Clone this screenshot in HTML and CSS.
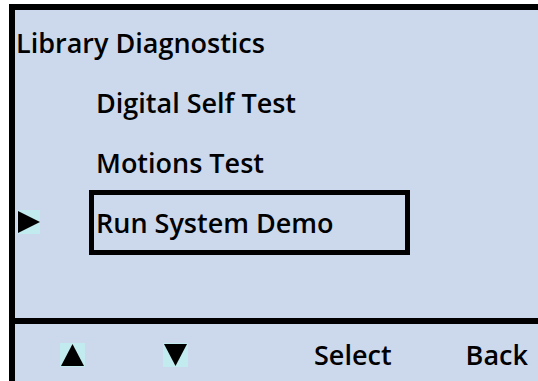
FILE: index.html
```html
<!DOCTYPE html>
<html lang="en">
<head>
    <meta charset="UTF-8">
    <meta name="viewport" content="width=device-width, initial-scale=1.0">
    <title>Library Diagnostics</title>
    <link rel="stylesheet" href="styles.css">
</head>
<body>
    <div class="screen">
        <div class="menu">
            <div class="menu-title">Library Diagnostics</div>
            <div class="menu-row">
                <span class="marker"></span>
                <span class="item">Digital Self Test</span>
            </div>
            <div class="menu-row">
                <span class="marker"></span>
                <span class="item">Motions Test</span>
            </div>
            <div class="menu-row selected">
                <span class="marker">
                    <svg class="glyph" width="23" height="24" viewBox="0 0 23 24">
                        <rect width="23" height="24" fill="#c2ebf0"/>
                        <polygon points="1,1 23,12 1,23" fill="#000"/>
                    </svg>
                </span>
                <span class="item">Run System Demo</span>
            </div>
        </div>

        <!-- Soft keys -->
        <div class="softkeys">
            <span class="key key-up">
                <svg class="glyph" width="25" height="24" viewBox="0 0 25 24">
                    <rect width="25" height="24" fill="#c2ebf0"/>
                    <polygon points="12.5,1 24,23 1,23" fill="#000"/>
                </svg>
            </span>
            <span class="key key-down">
                <svg class="glyph" width="25" height="24" viewBox="0 0 25 24">
                    <rect width="25" height="24" fill="#c2ebf0"/>
                    <polygon points="1,1 24,1 12.5,23" fill="#000"/>
                </svg>
            </span>
            <span class="key key-select">Select</span>
            <span class="key key-back">Back</span>
        </div>
    </div>
</body>
</html>
```
FILE: styles.css
```css
body {
    margin: 0;
    padding: 0;
    background-color: #ffffff;
    font-family: 'Open Sans', 'Liberation Sans', sans-serif;
    font-weight: 600;
    font-size: 27px;
    color: #000;
}

.screen {
    margin: 4px 0 0 9px;
    height: 377px;
    box-sizing: border-box;
    border-top: 6px solid #000;
    border-left: 6px solid #000;
    background-color: #ccd9ec;
    display: flex;
    flex-direction: column;
    overflow: hidden;
}

.menu {
    height: 308px;
    padding-top: 2px;
    box-sizing: border-box;
}

.menu-title {
    height: 60px;
    display: flex;
    align-items: center;
    padding-left: 1px;
}

.menu-row {
    height: 60px;
    display: flex;
    align-items: center;
}

.marker {
    width: 74px;
    padding-left: 2px;
    display: flex;
    align-items: center;
    box-sizing: border-box;
}

.glyph {
    display: block;
}

.item {
    display: flex;
    align-items: center;
    padding-left: 7px;
}

.selected .item {
    width: 321px;
    height: 65px;
    box-sizing: border-box;
    border: 5px solid #000;
    padding-left: 2px;
}

.softkeys {
    flex: 1;
    border-top: 6px solid #000;
    display: flex;
    align-items: center;
    padding-top: 4px;
}

.key-up {
    margin-left: 45px;
}

.key-down {
    margin-left: 78px;
}

.key-select {
    margin-left: 126px;
}

.key-back {
    margin-left: 74px;
}
```
